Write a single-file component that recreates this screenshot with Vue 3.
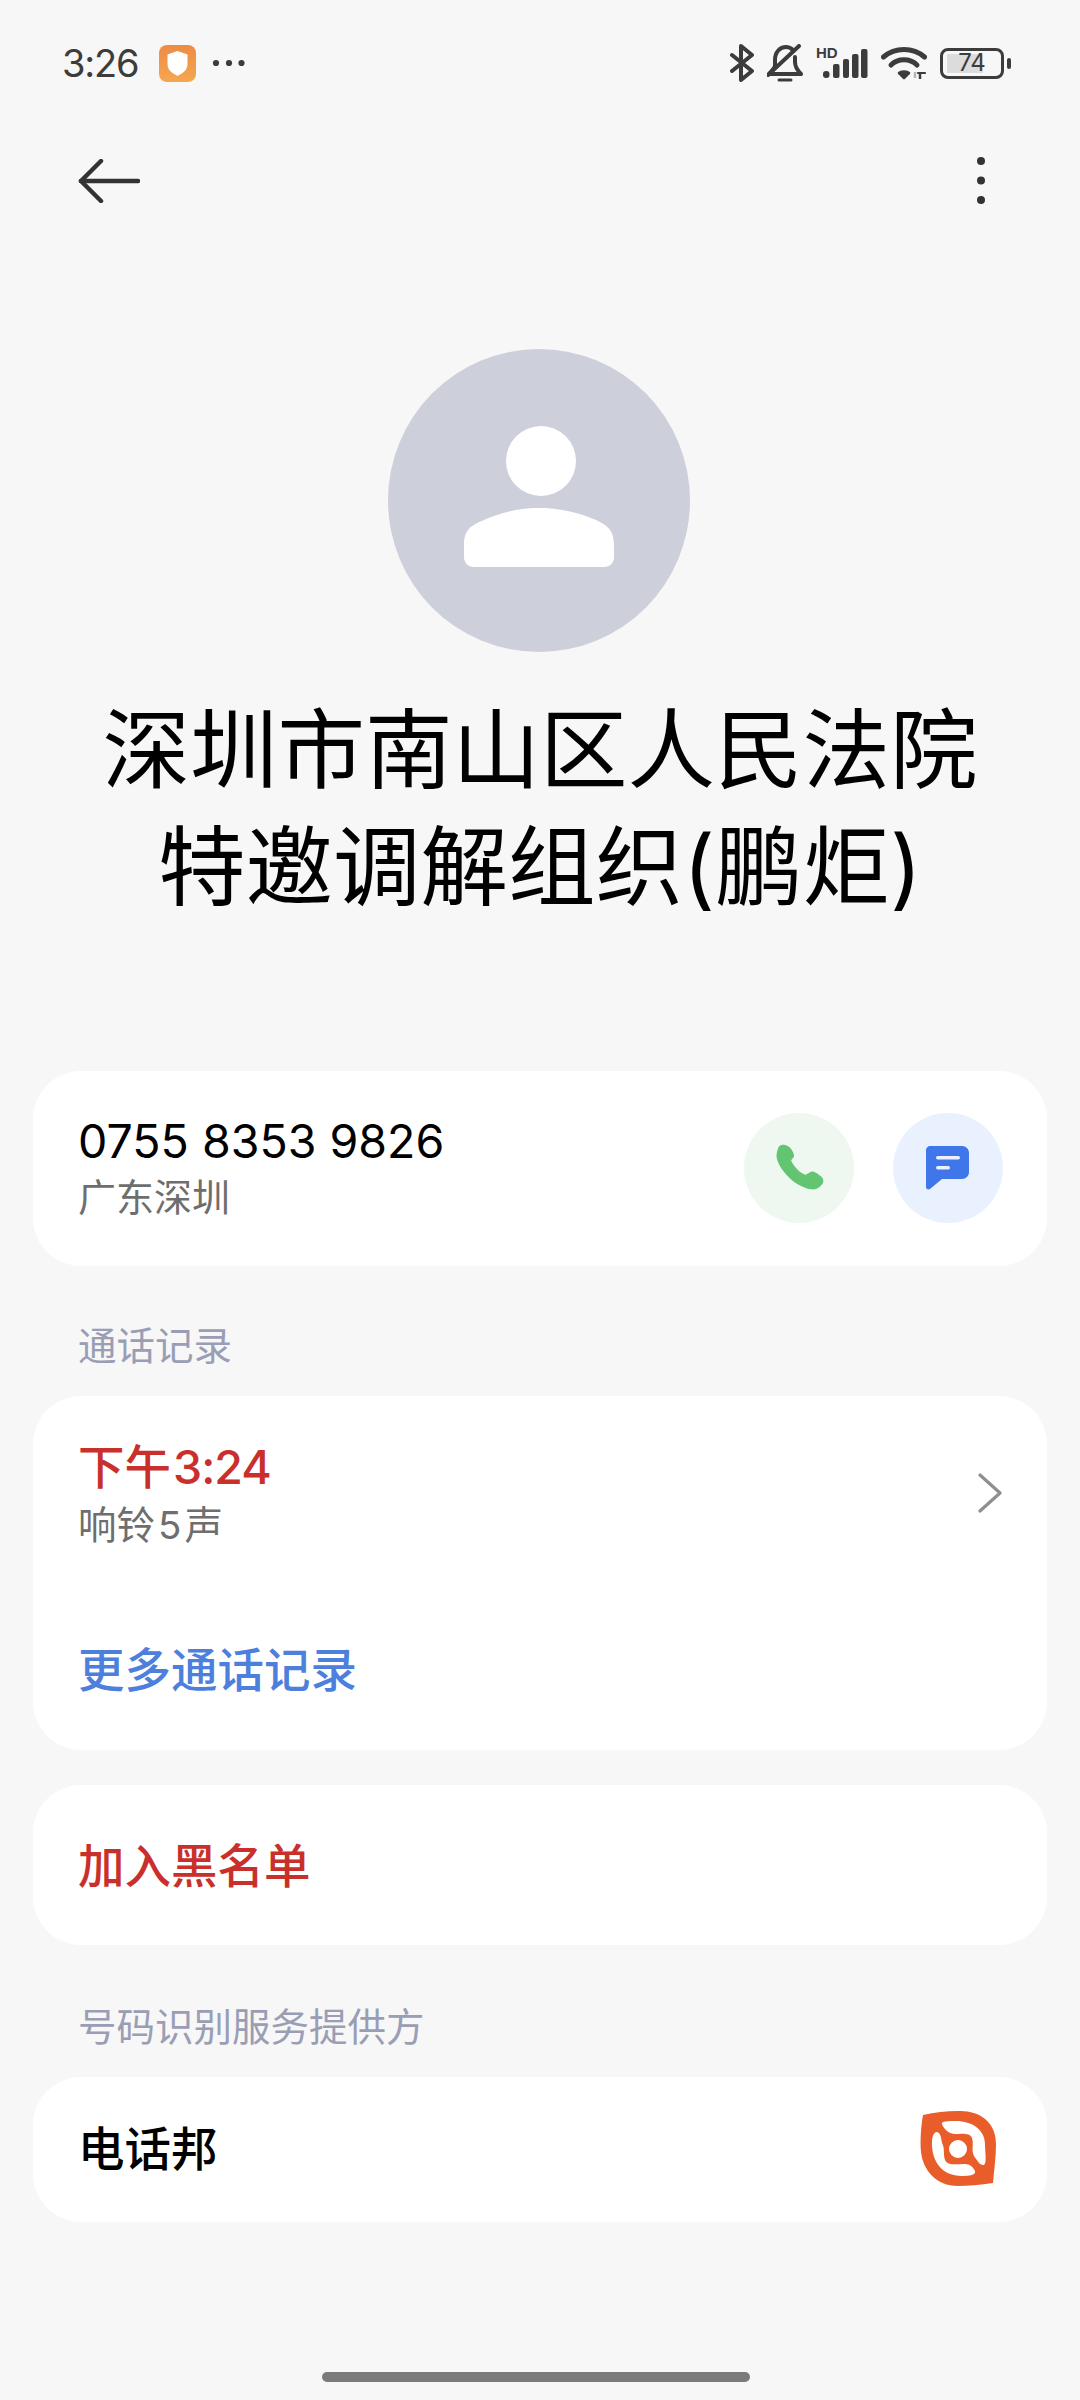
<script setup>
</script>

<template>
  <div class="screen">
    <div class="status">
      <div class="status-left">
        <span class="time">3:26</span>
        <svg class="appicon" width="37" height="37" viewBox="0 0 37 37">
          <defs>
            <linearGradient id="ag" x1="0" y1="0" x2="0" y2="1">
              <stop offset="0" stop-color="#ee8b45" />
              <stop offset="1" stop-color="#f5a74f" />
            </linearGradient>
          </defs>
          <rect width="37" height="37" rx="8" fill="url(#ag)" />
          <path d="M18.5 6 L28.500 9.500 V19 C28.500 25 24 28 18.500 31 C13 28 8.500 25 8.500 19 V9.500 Z" fill="#fff" />
        </svg>
        <svg class="more" width="33" height="8" viewBox="0 0 33 8">
          <circle cx="4" cy="4" r="3.100" fill="#3c3c3c" />
          <circle cx="17" cy="4" r="3.100" fill="#3c3c3c" />
          <circle cx="29.500" cy="4" r="3.100" fill="#3c3c3c" />
        </svg>
      </div>
      <div class="status-right">
        <svg width="24" height="38" viewBox="0 0 24 38" fill="none" stroke="#3c3c3c" stroke-width="4" stroke-linecap="round" stroke-linejoin="round">
          <path d="M2 11 L22 27 L11 36 V2 L22 11 L2 27" />
        </svg>
        <svg class="bell" width="36" height="38" viewBox="0 0 36 38" fill="none" stroke="#3c3c3c" stroke-width="4" stroke-linecap="round" stroke-linejoin="round">
          <path d="M8 22 V16 C8 8 13 3 19 3 C22 3 24 4 26 6" />
          <path d="M28 13 V18 C28 23 31 27 34 30 H2 C5 27 7 25 8 22" />
          <path d="M1 31 L32 2" />
          <path d="M12 36 H24" stroke-width="3" />
        </svg>
        <svg class="signal" width="52" height="32" viewBox="0 0 52 32">
          <text x="0" y="11" class="hd">HD</text>
          <rect x="7" y="24" width="6.500" height="7" rx="3" fill="#3c3c3c" />
          <rect x="17" y="17" width="6.500" height="14" rx="2" fill="#3c3c3c" />
          <rect x="27" y="12" width="6" height="19" rx="2" fill="#3c3c3c" />
          <rect x="36" y="7" width="6.500" height="24" rx="2" fill="#3c3c3c" />
          <rect x="45" y="2" width="6.500" height="29" rx="2" fill="#3c3c3c" />
        </svg>
        <svg class="wifi" width="46" height="34" viewBox="0 0 46 34" fill="none" stroke="#3c3c3c" stroke-width="5" stroke-linecap="round">
          <path d="M2.500 11 C14 1 32 1 43.500 11" />
          <path d="M10 19 C17 12 29 12 36 19" />
          <path d="M18 27 C20 25 26 25 28 27 L23 32 Z" fill="#3c3c3c" stroke-width="2.500" stroke-linejoin="round" />
          <path d="M34 26 V32" stroke-width="2.500" stroke="#b5b5b5" stroke-linecap="butt" />
          <path d="M39 26 V33" stroke-width="2.500" stroke-linecap="butt" />
          <path d="M37 27 H44" stroke-width="2.200" />
        </svg>
        <div class="battery">
          <div class="batt-body">
            <div class="batt-fill"></div>
            <span class="batt-num">74</span>
          </div>
          <div class="batt-nub"></div>
        </div>
      </div>
    </div>

    <div class="toolbar">
      <svg width="62" height="44" viewBox="0 0 62 44" fill="none" stroke="#333" stroke-width="4.500" stroke-linecap="round" stroke-linejoin="round">
        <path d="M60 22 H3" />
        <path d="M23 2 L3 22 L23 42" />
      </svg>
      <svg width="10" height="50" viewBox="0 0 10 50" fill="#333">
        <circle cx="5" cy="5" r="4" />
        <circle cx="5" cy="24.500" r="4" />
        <circle cx="5" cy="44" r="4" />
      </svg>
    </div>

    <div class="avatar">
      <svg width="302" height="303" viewBox="0 0 302 303">
        <ellipse cx="151" cy="151.500" rx="151" ry="151.500" fill="#cdcfda" />
        <circle cx="153" cy="112" r="35" fill="#fff" />
        <path d="M76 196 C76 180 84 176 96 171 C114 163 132 159 151 159 C170 159 190 163 208 171 C219 176 226 181 226 196 V208 C226 214 222 218 216 218 H86 C80 218 76 214 76 208 Z" fill="#fff" />
      </svg>
    </div>

    <h1 class="title">深圳市南山区人民法院<br />特邀调解组织(鹏炬)</h1>

    <section class="card card-phone">
      <div class="phone-info">
        <div class="number">0755 8353 9826</div>
        <div class="region">广东深圳</div>
      </div>
      <div class="actions">
        <div class="action action-call">
          <svg width="54" height="54" viewBox="0 0 48 48">
            <path d="M6 5 C8 3 11 3 13 4 L15 5 C17 6 19 10 19.500 12 C20 14 19 15 17 17 C18 21 25 29 30 30 C32 29 34 27 36 27 C38 27 44 31 45 33 C46 35 46 37 44 39 C42 41 40 43 37 43 C32 43 24 40 18 35 C11 29 5 21 4 14 C4 10 5 7 6 5 Z" fill="#63c572" />
          </svg>
        </div>
        <div class="action action-sms">
          <svg width="48" height="46" viewBox="0 0 48 46">
            <path d="M6 1 H38 C42 1 45 4 45 8 V27 C45 31 42 34 38 34 H18 L6 44 C4 45 2 44 2 42 V5 C2 3 4 1 6 1 Z" fill="#3f76ea" />
            <rect x="12" y="11" width="24" height="3.500" rx="1.700" fill="#eaf0fe" />
            <rect x="12" y="21" width="14" height="3.500" rx="1.700" fill="#eaf0fe" />
          </svg>
        </div>
      </div>
    </section>

    <div class="section-label label-log">通话记录</div>

    <section class="card card-log">
      <div class="log-row">
        <div>
          <div class="log-time">下午<span class="time-num">3:24</span></div>
          <div class="log-sub">响铃<span class="ring-num">5</span>声</div>
        </div>
        <svg width="26" height="40" viewBox="0 0 26 40" fill="none" stroke="#8f8f8f" stroke-width="3.200" stroke-linecap="round" stroke-linejoin="round">
          <path d="M3 2 L23 20 L3 38" />
        </svg>
      </div>
      <div class="more-log">更多通话记录</div>
    </section>

    <section class="card card-block">加入黑名单</section>

    <div class="section-label label-provider">号码识别服务提供方</div>

    <section class="card card-provider">
      <span class="provider-name">电话邦</span>
      <svg class="provider-logo" width="78" height="76" viewBox="0 0 78 76">
        <path fill-rule="evenodd" fill="#e95d2a" d="M3 5 C20 1 40 0 50 2 C65 5 76 16 76 34 C76 48 74 60 73 73 C60 75 48 76 38 76 C16 76 3 60 1 42 C0 30 1 16 3 5 Z M16 22 C12 24 12 30 12 36 C13 52 22 66 42 66 C50 66 56 65 55 61 C53 57 50 54 45 54 C36 54 28 56 25 50 C23 44 25 38 22 33 C21 28 21 22 16 22 Z M22 14 C24 20 30 24 35 24 C40 24 50 22 52 28 C54 34 51 40 54 46 C57 50 60 56 64 55 C67 53 65 42 65 34 C65 20 52 11 36 11 C28 11 21 11 22 14 Z M38 30 A9 9 0 1 0 38.010 48 A9 9 0 1 0 38 30 Z" />
      </svg>
    </section>

    <div class="home-bar"></div>
  </div>
</template>

<style scoped>
.screen {
  width: 1080px;
  height: 2400px;
  background: #f7f7f7;
  display: flex;
  flex-direction: column;
  font-family: "Inter", "Noto Sans CJK SC", sans-serif;
  position: relative;
  overflow: hidden;
}
.status {
  height: 126px;
  display: flex;
  justify-content: space-between;
  align-items: center;
  padding: 0 69px 0 62px;
  box-sizing: border-box;
}
.status-left, .status-right { display: flex; align-items: center; }
.status-right { gap: 13px; }
.time {
  font-size: 38px;
  letter-spacing: -1.2px;
  color: #3c3c3c;
  width: 97px;
}
.more { margin-left: 16px; }
.hd { font-family: "Liberation Sans", sans-serif; font-size: 15px; font-weight: 700; fill: #3c3c3c; }
.battery { display: flex; align-items: center; gap: 3px; }
.batt-body {
  width: 64px;
  height: 31px;
  box-sizing: border-box;
  border: 3px solid #3c3c3c;
  border-radius: 8px;
  position: relative;
  display: flex;
  align-items: center;
  justify-content: center;
}
.batt-fill {
  position: absolute;
  left: 4px;
  top: 3px;
  bottom: 3px;
  width: 36px;
  background: #dcdcdc;
}
.batt-num {
  position: relative;
  font-size: 24px;
  line-height: 1;
  color: #3c3c3c;
}
.batt-nub { width: 4px; height: 11px; border-radius: 2px; background: #3c3c3c; }
.toolbar {
  height: 110px;
  display: flex;
  justify-content: space-between;
  align-items: center;
  padding: 0 94px 0 78px;
}
.avatar { display: flex; justify-content: center; margin-top: 113px; margin-left: -2px; }
.title {
  margin: 40px 0 0;
  font-size: 87.5px;
  line-height: 117px;
  font-weight: 400;
  text-align: center;
  color: #000;
}
.card {
  margin: 0 33px;
  background: #fff;
  border-radius: 48px;
  box-sizing: border-box;
}
.card-phone {
  margin-top: 145px;
  height: 195px;
  display: flex;
  justify-content: space-between;
  align-items: center;
  padding: 0 44px 2px 45px;
}
.number { font-size: 46.5px; line-height: 58px; color: #000; }
.region { font-size: 38px; line-height: 54px; color: #6e6e6e; }
.actions { display: flex; gap: 39px; }
.action { width: 110px; height: 110px; border-radius: 50%; display: flex; align-items: center; justify-content: center; }
.action-call { background: #eef8f0; }
.action-sms { background: #eaf1fe; }
.section-label { font-size: 38.5px; line-height: 54px; color: #9a9eb5; padding-left: 78px; }
.label-log { margin-top: 53px; height: 77px; }
.card-log { height: 354px; padding: 39px 44px 0 45px; }
.log-row { display: flex; justify-content: space-between; align-items: center; }
.log-time { font-size: 46.5px; line-height: 64px; font-weight: 500; color: #c9302c; }
.time-num { margin-left: 2px; letter-spacing: -1px; }
.log-sub { font-size: 38.5px; line-height: 52px; color: #6e6e6e; }
.ring-num { margin: 0 3px; }
.more-log { margin-top: 87px; font-size: 46.5px; line-height: 64px; font-weight: 500; color: #4c80dc; }
.card-block {
  margin-top: 35px;
  height: 160px;
  display: flex;
  align-items: center;
  padding: 0 0 6px 45px;
  font-size: 46.5px;
  font-weight: 500;
  color: #c9302c;
}
.label-provider { margin-top: 55px; height: 77px; }
.card-provider {
  height: 145px;
  display: flex;
  justify-content: space-between;
  align-items: center;
  padding: 0 49px 0 45px;
  font-size: 46.5px;
  font-weight: 500;
  color: #000;
}
.provider-name { margin-bottom: 8px; }
.provider-logo { margin-bottom: 4px; }
.home-bar {
  position: absolute;
  left: 322px;
  bottom: 18px;
  width: 428px;
  height: 10px;
  border-radius: 5px;
  background: #7b7b7b;
}
</style>

<style>
html, body { margin: 0; background: #f7f7f7; }
</style>
